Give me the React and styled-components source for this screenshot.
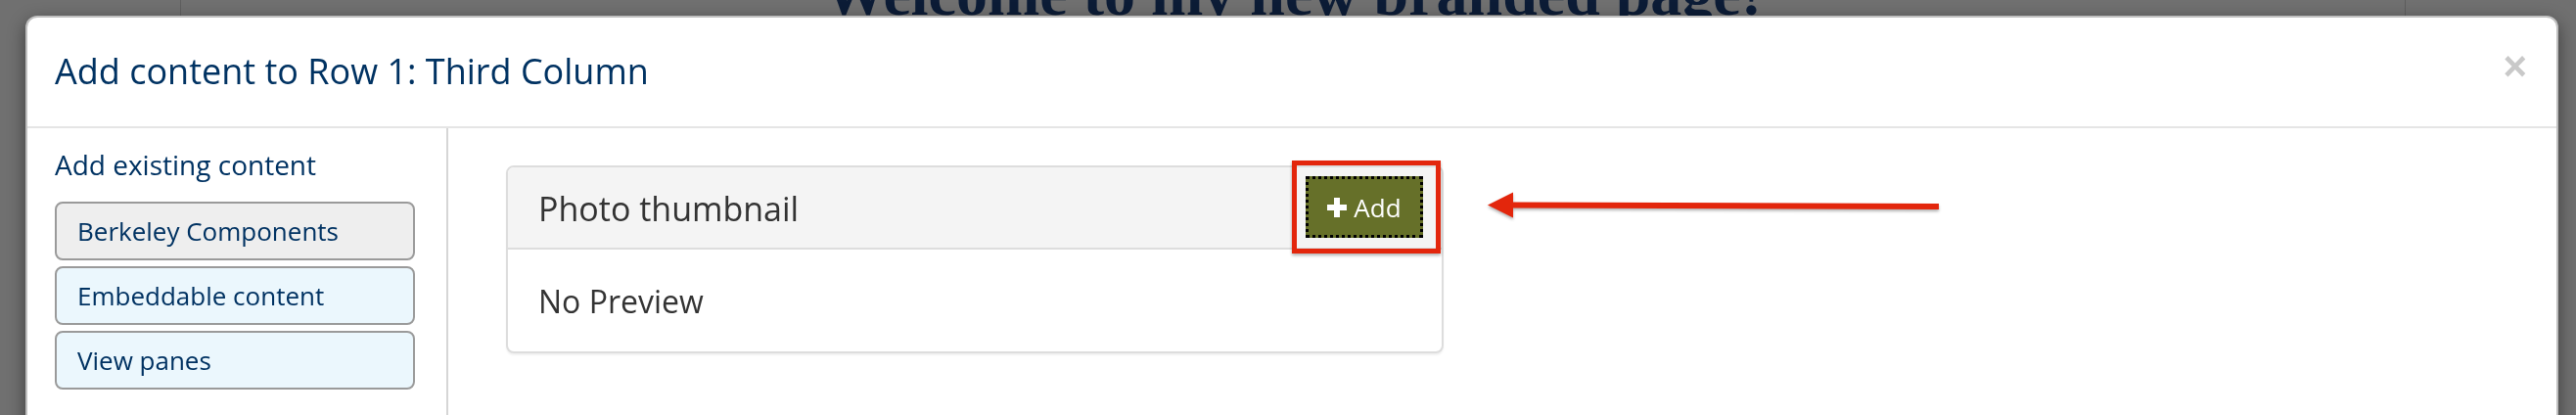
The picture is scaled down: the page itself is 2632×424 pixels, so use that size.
import React from "react";
import styled, { createGlobalStyle } from "styled-components";

const GlobalStyle = createGlobalStyle`
  * { box-sizing: border-box; }
  html, body {
    margin: 0;
    height: 424px;
    overflow: hidden;
    background: #707070;
    font-family: "Open Sans", "Liberation Sans", sans-serif;
  }
`;

const PageBehind = styled.div`
  margin-left: 184px;
  width: 2274px;
  height: 424px;
  padding-top: 1px;
  border-left: 1px solid #5e5e5e;
  border-right: 1px solid #5e5e5e;
  overflow: hidden;
`;

const PageHeading = styled.h1`
  margin: -39px 0 0;
  text-align: center;
  font-family: "Liberation Serif", serif;
  font-weight: 700;
  font-size: 64px;
  line-height: 64px;
  color: #0c1c36;
`;

const Modal = styled.div`
  position: fixed;
  top: 16px;
  left: 26px;
  width: 2588px;
  bottom: -20px;
  display: flex;
  flex-direction: column;
  background: #fff;
  border: 2px solid rgba(0, 0, 0, 0.25);
  border-radius: 12px;
  box-shadow: 0 6px 18px rgba(0, 0, 0, 0.45);
`;

const Header = styled.div`
  display: flex;
  align-items: flex-start;
  justify-content: space-between;
  padding: 29px 30px 30px 28px;
  border-bottom: 2px solid #e5e5e5;
`;

const Title = styled.h4`
  margin: 0;
  font-size: 36px;
  line-height: 52px;
  font-weight: 400;
  color: #003262;
`;

const Close = styled.button`
  border: 0;
  background: none;
  padding: 0;
  margin: 0;
  font-family: "Liberation Sans", Arial, sans-serif;
  font-weight: 700;
  font-size: 42px;
  line-height: 42px;
  color: #c9c9c9;
  cursor: pointer;
`;

const Body = styled.div`
  flex: 1;
  display: flex;
`;

const Sidebar = styled.div`
  width: 430px;
  flex: none;
  padding: 17px 32px 0 28px;
  border-right: 2px solid #d6d6d6;
`;

const SidebarHeading = styled.div`
  font-size: 28px;
  line-height: 40px;
  color: #003262;
  margin-bottom: 18px;
`;

const TabList = styled.div`
  display: flex;
  flex-direction: column;
  gap: 6px;
`;

const Tab = styled.div`
  padding: 10px 21px;
  border: 2px solid #9a9a9a;
  border-radius: 8px;
  font-size: 26px;
  line-height: 36px;
  color: #003262;
  background: ${(p) => (p.$active ? "#eeeeee" : "#ebf7fd")};
`;

const Main = styled.div`
  flex: 1;
  display: flex;
  align-items: flex-start;
  padding: 38px 0 0 59px;
`;

const Card = styled.div`
  width: 958px;
  border: 2px solid #dddddd;
  border-radius: 8px;
  background: #fff;
  box-shadow: 0 2px 2px rgba(0, 0, 0, 0.06);
`;

const CardHeader = styled.div`
  height: 84px;
  display: flex;
  align-items: flex-start;
  justify-content: space-between;
  padding: 9px 19px 0 31px;
  background: #f4f4f4;
  border-bottom: 2px solid #dddddd;
  border-radius: 6px 6px 0 0;
`;

const CardTitle = styled.div`
  margin-top: 9px;
  font-size: 34px;
  line-height: 48px;
  color: #333;
`;

const CardBody = styled.div`
  padding: 30px 31px 28px;
  font-size: 32px;
  line-height: 46px;
  color: #333;
`;

const AddWrap = styled.div`
  position: relative;
`;

const Highlight = styled.div`
  position: absolute;
  top: -16px;
  bottom: -16px;
  left: -14px;
  right: -18px;
  border: 5px solid #e3260c;
  box-shadow: 0 2px 3px rgba(0, 0, 0, 0.3);
  pointer-events: none;
`;

const AddButton = styled.button`
  width: 120px;
  height: 63px;
  display: inline-flex;
  align-items: center;
  justify-content: center;
  gap: 7px;
  padding: 0;
  background: #667029;
  border: 3px dotted #000;
  color: #fff;
  font-family: "Open Sans", sans-serif;
  font-size: 26px;
  line-height: 36px;
  cursor: pointer;
`;

const Arrow = styled.svg`
  flex: none;
  margin: 24px 0 0 45px;
  filter: drop-shadow(0 2px 1.5px rgba(0, 0, 0, 0.3));
`;

const PlusIcon = () => (
  <svg width="20" height="20" viewBox="0 0 20 20">
    <rect x="0" y="7" width="20" height="6" fill="#fff" />
    <rect x="7" y="0" width="6" height="20" fill="#fff" />
  </svg>
);

const tabs = [
  { label: "Berkeley Components", active: true },
  { label: "Embeddable content" },
  { label: "View panes" },
];

export default function App() {
  return (
    <>
      <GlobalStyle />
      <PageBehind>
        <PageHeading>Welcome to my new branded page!</PageHeading>
      </PageBehind>
      <Modal>
        <Header>
          <Title>Add content to Row 1: Third Column</Title>
          <Close aria-label="Close">×</Close>
        </Header>
        <Body>
          <Sidebar>
            <SidebarHeading>Add existing content</SidebarHeading>
            <TabList>
              {tabs.map((t) => (
                <Tab key={t.label} $active={t.active}>
                  {t.label}
                </Tab>
              ))}
            </TabList>
          </Sidebar>
          <Main>
            <Card>
              <CardHeader>
                <CardTitle>Photo thumbnail</CardTitle>
                <AddWrap>
                  <AddButton>
                    <PlusIcon />
                    Add
                  </AddButton>
                  <Highlight />
                </AddWrap>
              </CardHeader>
              <CardBody>No Preview</CardBody>
            </Card>
            <Arrow width="464" height="34" viewBox="0 0 464 34">
              <polygon points="0,16.5 26,3.5 26,29.5" fill="#e3260c" />
              <polygon points="24,13.5 461,15 461,21 24,19.5" fill="#e3260c" />
            </Arrow>
          </Main>
        </Body>
      </Modal>
    </>
  );
}
